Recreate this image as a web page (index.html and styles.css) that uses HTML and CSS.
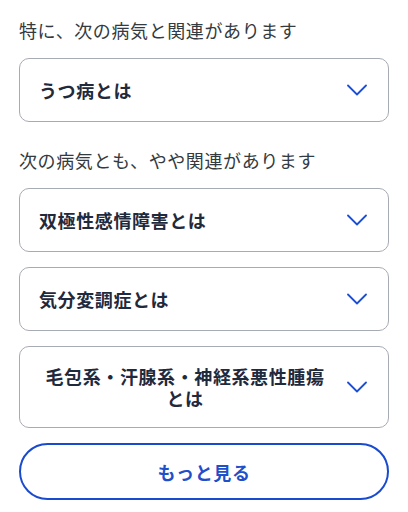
FILE: index.html
```html
<!DOCTYPE html>
<html lang="ja">
<head>
<meta charset="utf-8">
<link rel="stylesheet" href="styles.css">
</head>
<body>
<div class="page">
  <p class="lead">特に、次の病気と関連があります</p>
  <div class="list">
    <button class="card"><span class="label">うつ病とは</span><svg class="chev" width="20" height="12" viewBox="0 0 20 12"><path d="M1 1.5 L10 10.5 L19 1.5" fill="none" stroke="currentColor" stroke-width="1.8" stroke-linecap="round" stroke-linejoin="round"/></svg></button>
  </div>
  <p class="lead second">次の病気とも、やや関連があります</p>
  <div class="list">
    <button class="card"><span class="label">双極性感情障害とは</span><svg class="chev" width="20" height="12" viewBox="0 0 20 12"><path d="M1 1.5 L10 10.5 L19 1.5" fill="none" stroke="currentColor" stroke-width="1.8" stroke-linecap="round" stroke-linejoin="round"/></svg></button>
    <button class="card"><span class="label">気分変調症とは</span><svg class="chev" width="20" height="12" viewBox="0 0 20 12"><path d="M1 1.5 L10 10.5 L19 1.5" fill="none" stroke="currentColor" stroke-width="1.8" stroke-linecap="round" stroke-linejoin="round"/></svg></button>
    <button class="card"><span class="label">毛包系・汗腺系・神経系悪性腫瘍とは</span><svg class="chev" width="20" height="12" viewBox="0 0 20 12"><path d="M1 1.5 L10 10.5 L19 1.5" fill="none" stroke="currentColor" stroke-width="1.8" stroke-linecap="round" stroke-linejoin="round"/></svg></button>
    <button class="more">もっと見る</button>
  </div>
</div>
</body>
</html>
```

FILE: styles.css
```css
* { box-sizing: border-box; }
html, body { margin: 0; padding: 0; background: #ffffff; }
body {
  font-family: "Noto Sans CJK JP", "Noto Sans", sans-serif;
  color: #333333;
}
.page {
  padding: 17px 19px 0 19px;
}
.lead {
  margin: 0 0 14px 0;
  font-size: 18px;
  line-height: 27px;
  letter-spacing: 0.6px;
  color: #333a40;
}
.lead.second {
  margin-top: 25px;
}
.list {
  display: flex;
  flex-direction: column;
  gap: 15px;
}
.card {
  display: flex;
  align-items: center;
  justify-content: space-between;
  gap: 16px;
  width: 100%;
  min-height: 64px;
  padding: 18px 21px 18px 19px;
  border: 1px solid #a7abb3;
  border-radius: 10px;
  background: #ffffff;
  font-family: inherit;
  text-align: center;
  cursor: pointer;
}
.label {
  flex: 0 1 auto;
  font-size: 18px;
  line-height: 22px;
  font-weight: 700;
  letter-spacing: 0.6px;
  color: #1f2a3d;
  text-align: center;
}
.chev {
  flex: 0 0 20px;
  color: #1c4fd4;
}
.more {
  display: flex;
  align-items: center;
  justify-content: center;
  width: 100%;
  height: 57px;
  border: 2px solid #1a4bcf;
  border-radius: 999px;
  background: #ffffff;
  font-family: inherit;
  font-size: 18px;
  font-weight: 700;
  letter-spacing: 0.6px;
  color: #1f4fc9;
  cursor: pointer;
}
```
